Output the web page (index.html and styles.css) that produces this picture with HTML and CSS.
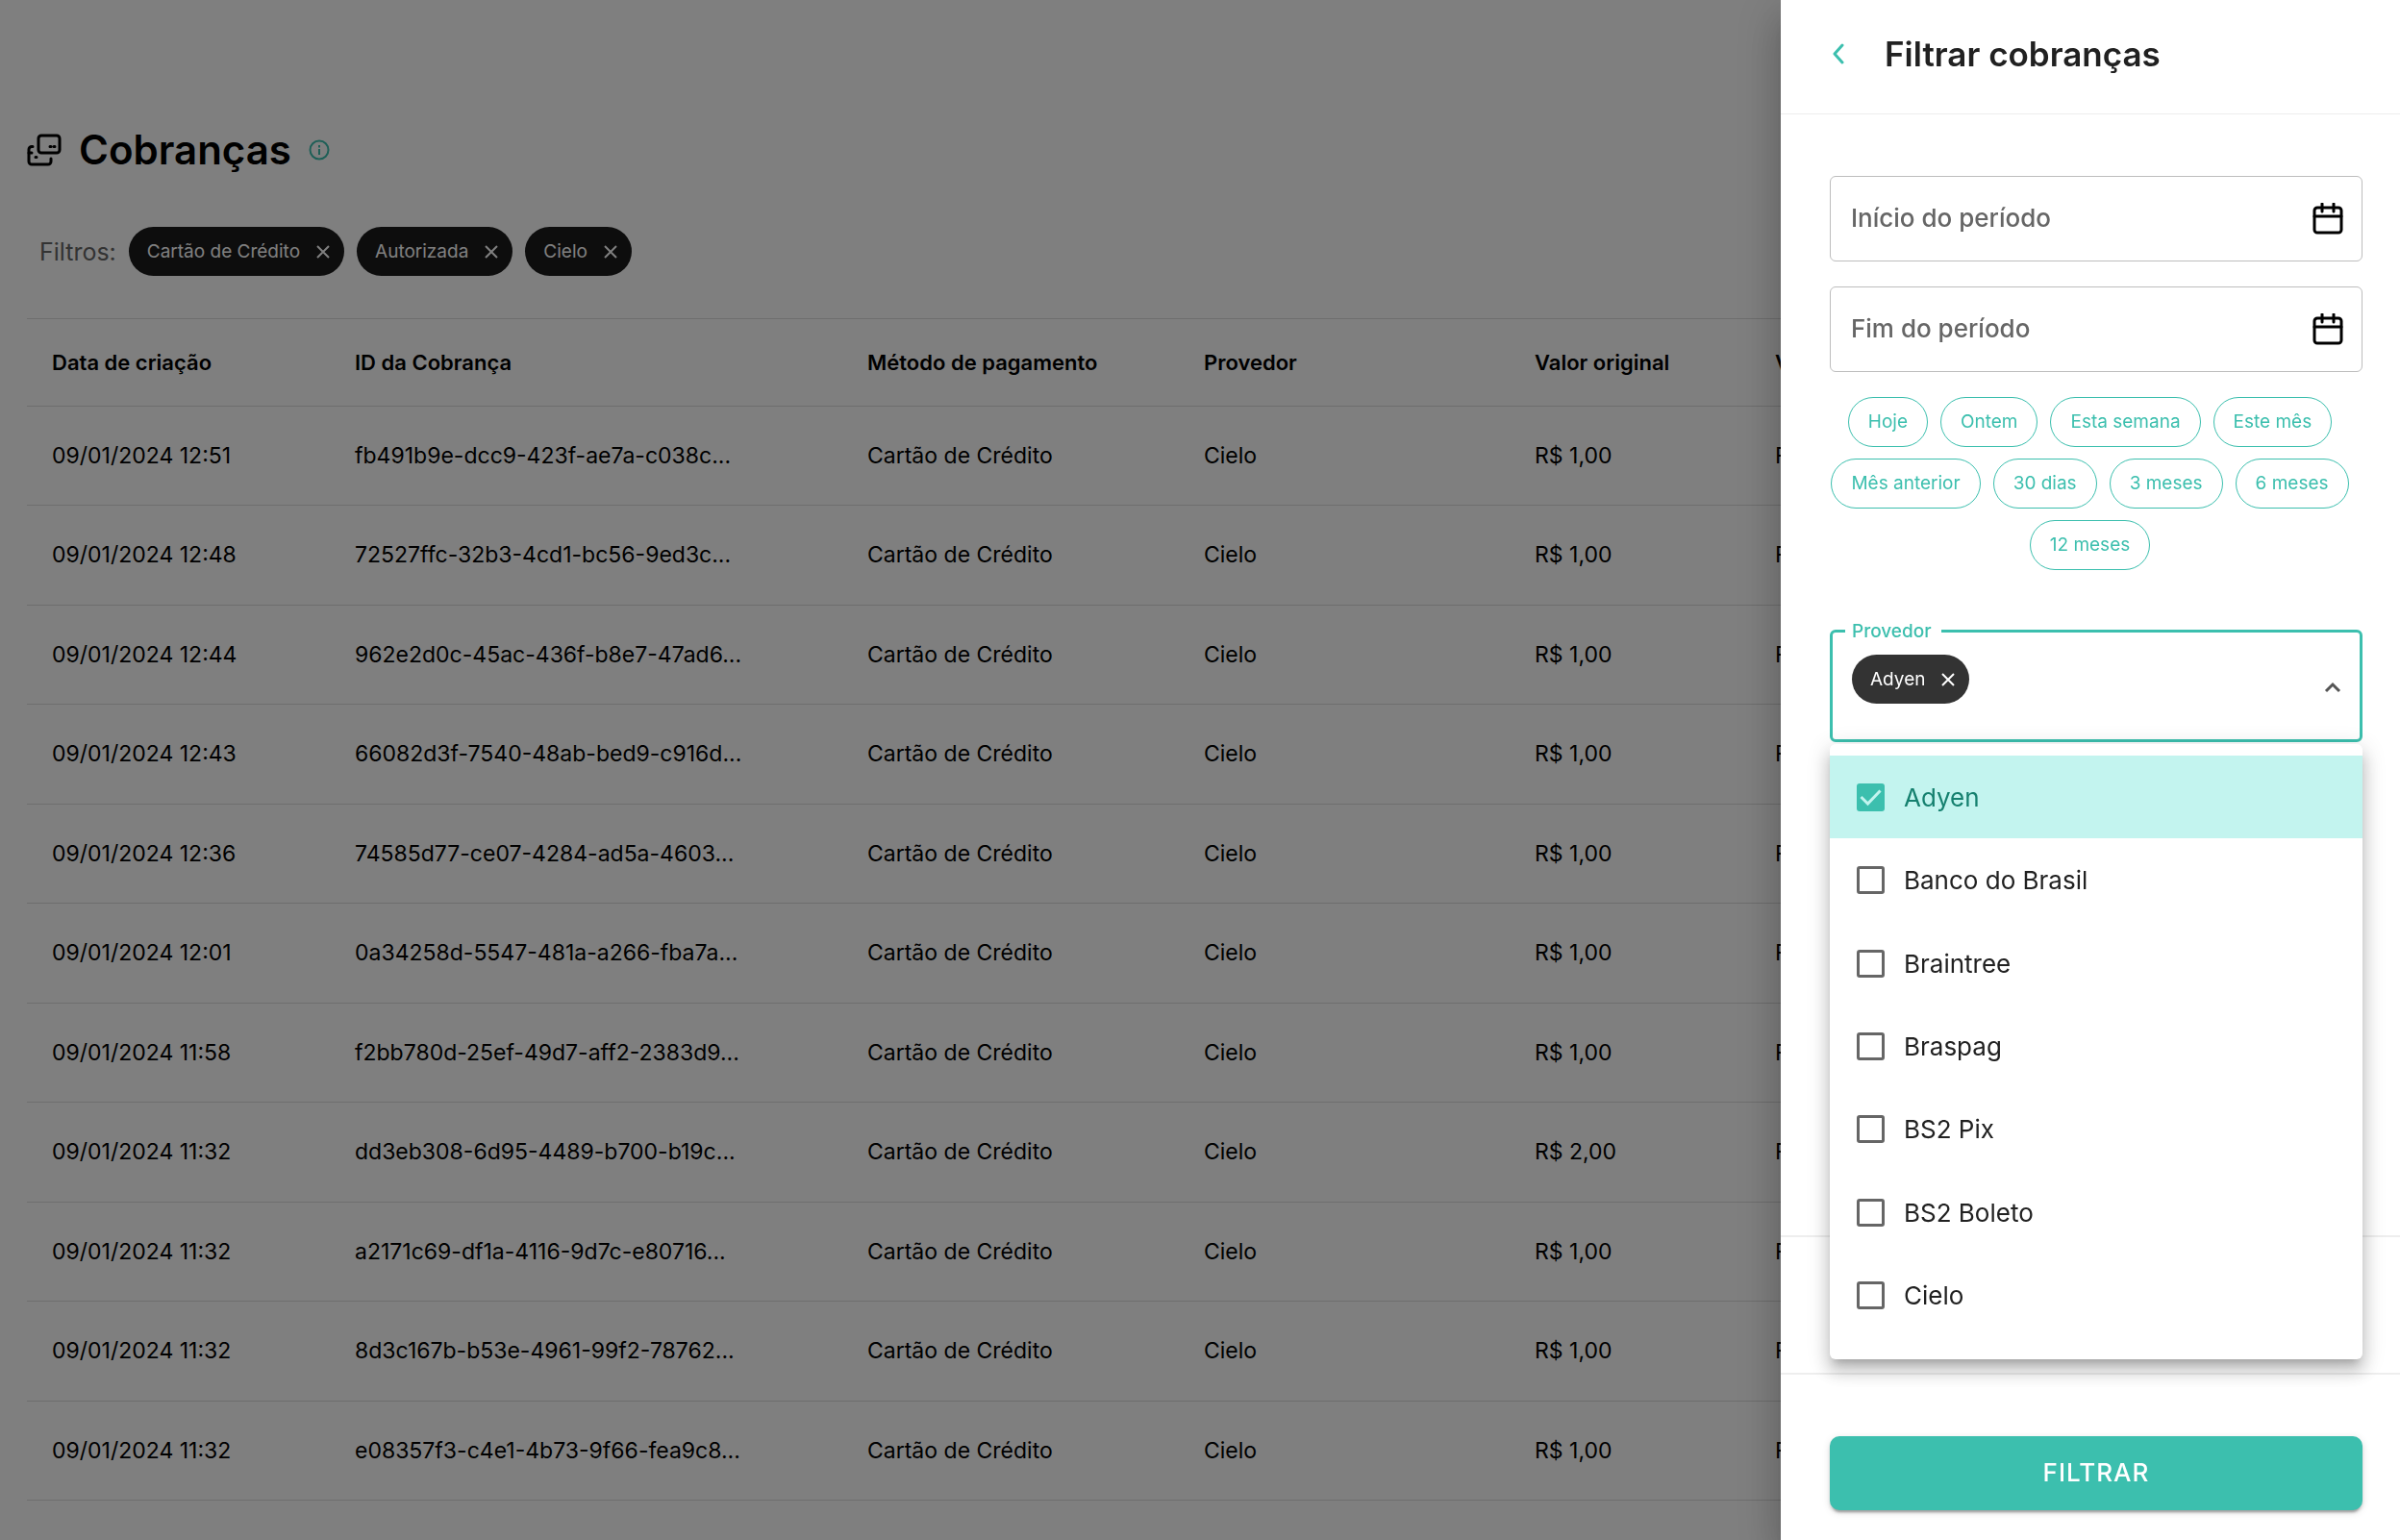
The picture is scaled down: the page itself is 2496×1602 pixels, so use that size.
FILE: index.html
```html
<!DOCTYPE html>
<html lang="pt-BR">
<head>
    <meta charset="UTF-8">
    <meta name="viewport" content="width=device-width, initial-scale=1.0">
    <title>Cobranças</title>
    <link rel="stylesheet" href="styles.css">
</head>
<body>

    <main class="page">
        <header class="page-header">
            <svg class="page-icon" viewBox="0 0 36 34" fill="none" stroke="currentColor" stroke-width="3" stroke-linecap="round" stroke-linejoin="round">
                <rect x="12" y="2" width="22" height="18" rx="3"/>
                <path d="M6 13.500H5a3 3 0 0 0-3 3V29a3 3 0 0 0 3 3h17a3 3 0 0 0 3-3v-3"/>
                <path d="M2 20h3M9 24.500h1M24 13.500h1M28 13.500h1"/>
            </svg>
            <h1>Cobranças</h1>
            <svg class="info-icon" viewBox="0 0 22 22" fill="none" stroke="currentColor" stroke-width="2">
                <circle cx="11" cy="11" r="9.500"/>
                <path d="M11 10v6M11 6v2.500"/>
            </svg>
        </header>

        <div class="filters">
            <span class="filters-label">Filtros:</span>
            <button class="chip" type="button">Cartão de Crédito <svg viewBox="0 0 14 14"><path d="M1 1l12 12M13 1L1 13"/></svg></button>
            <button class="chip" type="button">Autorizada <svg viewBox="0 0 14 14"><path d="M1 1l12 12M13 1L1 13"/></svg></button>
            <button class="chip" type="button">Cielo <svg viewBox="0 0 14 14"><path d="M1 1l12 12M13 1L1 13"/></svg></button>
        </div>

        <div class="table-wrap">
            <table>
                <colgroup>
                    <col class="col-date">
                    <col class="col-id">
                    <col class="col-method">
                    <col class="col-provider">
                    <col class="col-value">
                    <col>
                </colgroup>
                <thead>
                    <tr>
                        <th>Data de criação</th>
                        <th>ID da Cobrança</th>
                        <th>Método de pagamento</th>
                        <th>Provedor</th>
                        <th>Valor original</th>
                        <th>Valor</th>
                    </tr>
                </thead>
                <tbody>
                    <tr><td>09/01/2024 12:51</td><td>fb491b9e-dcc9-423f-ae7a-c038c...</td><td>Cartão de Crédito</td><td>Cielo</td><td>R$ 1,00</td><td>R$ 1,00</td></tr>
                    <tr><td>09/01/2024 12:48</td><td>72527ffc-32b3-4cd1-bc56-9ed3c...</td><td>Cartão de Crédito</td><td>Cielo</td><td>R$ 1,00</td><td>R$ 1,00</td></tr>
                    <tr><td>09/01/2024 12:44</td><td>962e2d0c-45ac-436f-b8e7-47ad6...</td><td>Cartão de Crédito</td><td>Cielo</td><td>R$ 1,00</td><td>R$ 1,00</td></tr>
                    <tr><td>09/01/2024 12:43</td><td>66082d3f-7540-48ab-bed9-c916d...</td><td>Cartão de Crédito</td><td>Cielo</td><td>R$ 1,00</td><td>R$ 1,00</td></tr>
                    <tr><td>09/01/2024 12:36</td><td>74585d77-ce07-4284-ad5a-4603...</td><td>Cartão de Crédito</td><td>Cielo</td><td>R$ 1,00</td><td>R$ 1,00</td></tr>
                    <tr><td>09/01/2024 12:01</td><td>0a34258d-5547-481a-a266-fba7a...</td><td>Cartão de Crédito</td><td>Cielo</td><td>R$ 1,00</td><td>R$ 1,00</td></tr>
                    <tr><td>09/01/2024 11:58</td><td>f2bb780d-25ef-49d7-aff2-2383d9...</td><td>Cartão de Crédito</td><td>Cielo</td><td>R$ 1,00</td><td>R$ 1,00</td></tr>
                    <tr><td>09/01/2024 11:32</td><td>dd3eb308-6d95-4489-b700-b19c...</td><td>Cartão de Crédito</td><td>Cielo</td><td>R$ 2,00</td><td>R$ 2,00</td></tr>
                    <tr><td>09/01/2024 11:32</td><td>a2171c69-df1a-4116-9d7c-e80716...</td><td>Cartão de Crédito</td><td>Cielo</td><td>R$ 1,00</td><td>R$ 1,00</td></tr>
                    <tr><td>09/01/2024 11:32</td><td>8d3c167b-b53e-4961-99f2-78762...</td><td>Cartão de Crédito</td><td>Cielo</td><td>R$ 1,00</td><td>R$ 1,00</td></tr>
                    <tr><td>09/01/2024 11:32</td><td>e08357f3-c4e1-4b73-9f66-fea9c8...</td><td>Cartão de Crédito</td><td>Cielo</td><td>R$ 1,00</td><td>R$ 1,00</td></tr>
                </tbody>
            </table>
        </div>
    </main>

    <div class="backdrop"></div>

    <aside class="drawer">
        <header class="drawer-header">
            <button class="back" type="button" aria-label="Voltar">
                <svg viewBox="0 0 12 24"><path d="M10 3L2 12l8 9"/></svg>
            </button>
            <h2>Filtrar cobranças</h2>
        </header>

        <form class="drawer-body" id="filter-form">
            <div class="date-field">
                <input type="text" placeholder="Início do período" aria-label="Início do período">
                <svg viewBox="0 0 32 34"><rect x="2" y="5" width="28" height="26" rx="3"/><path d="M2 14h28M10 1v8M22 1v8"/></svg>
            </div>
            <div class="date-field">
                <input type="text" placeholder="Fim do período" aria-label="Fim do período">
                <svg viewBox="0 0 32 34"><rect x="2" y="5" width="28" height="26" rx="3"/><path d="M2 14h28M10 1v8M22 1v8"/></svg>
            </div>

            <div class="shortcuts">
                <button type="button">Hoje</button>
                <button type="button">Ontem</button>
                <button type="button">Esta semana</button>
                <button type="button">Este mês</button>
                <button type="button">Mês anterior</button>
                <button type="button">30 dias</button>
                <button type="button">3 meses</button>
                <button type="button">6 meses</button>
                <button type="button">12 meses</button>
            </div>

            <div class="provider">
                <fieldset class="provider-field">
                    <legend>Provedor</legend>
                    <button class="chip" type="button">Adyen <svg viewBox="0 0 14 14"><path d="M1 1l12 12M13 1L1 13"/></svg></button>
                    <svg class="chevron" viewBox="0 0 18 12"><path d="M2 10l7-7 7 7"/></svg>
                </fieldset>

                <div class="menu">
                    <label class="selected"><input type="checkbox" checked> Adyen</label>
                    <label><input type="checkbox"> Banco do Brasil</label>
                    <label><input type="checkbox"> Braintree</label>
                    <label><input type="checkbox"> Braspag</label>
                    <label><input type="checkbox"> BS2 Pix</label>
                    <label><input type="checkbox"> BS2 Boleto</label>
                    <label><input type="checkbox"> Cielo</label>
                </div>
            </div>
        </form>

        <div class="drawer-section"></div>

        <footer class="drawer-footer">
            <button class="submit" type="submit" form="filter-form">FILTRAR</button>
        </footer>
    </aside>

</body>
</html>
```
FILE: styles.css
```css
* {
    box-sizing: border-box;
}
body {
    margin: 0;
    font-family: Inter, "Liberation Sans", sans-serif;
    font-size: 23px;
    color: #000;
    background-color: #fff;
}
button, input {
    font-family: inherit;
}
h1, h2 {
    margin: 0;
}
svg {
    flex: none;
}

/* page */
.page {
    display: flex;
    flex-direction: column;
    min-height: 100vh;
    padding: 128px 28px 41px;
}
.page-header {
    display: flex;
    align-items: center;
    gap: 18px;
    height: 56px;
}
.page-header h1 {
    padding-bottom: 2px;
    font-size: 42px;
    font-weight: 600;
}
.page-icon {
    width: 36px;
    height: 34px;
}
.info-icon {
    width: 22px;
    height: 22px;
    color: #3cbfae;
}
.filters {
    display: flex;
    align-items: center;
    gap: 13px;
    margin: 52px 0 44px;
    padding-left: 13px;
}
.filters-label {
    font-size: 25px;
    color: #666;
}
.chip {
    display: flex;
    align-items: center;
    gap: 17px;
    height: 51px;
    padding: 0 15px 0 19px;
    border: none;
    border-radius: 26px;
    background-color: #333;
    color: #fff;
    font-size: 19px;
}
.filters .chip {
    background-color: #1a1a1a;
}
.chip svg {
    width: 14px;
    height: 14px;
    fill: none;
    stroke: currentColor;
    stroke-width: 2;
}

/* table */
.table-wrap {
    display: flex;
    flex: 1;
    border-top: 1px solid #dcdcdc;
}
table {
    width: 100%;
    table-layout: fixed;
    border-collapse: collapse;
}
.col-date {
    width: 315px;
}
.col-id {
    width: 533px;
}
.col-method {
    width: 350px;
}
.col-provider {
    width: 344px;
}
.col-value {
    width: 250px;
}
th, td {
    padding: 0 26px;
    border-bottom: 1px solid #dcdcdc;
    text-align: left;
    white-space: nowrap;
}
th {
    height: 90px;
    font-size: 22px;
    font-weight: 600;
}

/* drawer */
.backdrop {
    position: fixed;
    inset: 0;
    background-color: rgba(0, 0, 0, 0.5);
}
.drawer {
    position: fixed;
    top: 0;
    right: 0;
    bottom: 0;
    display: flex;
    flex-direction: column;
    width: 644px;
    background-color: #fff;
    box-shadow: 0 13px 16px -8px rgba(0, 0, 0, 0.2), 0 26px 39px 3px rgba(0, 0, 0, 0.14), 0 10px 48px 8px rgba(0, 0, 0, 0.12);
}
.drawer-header {
    display: flex;
    align-items: center;
    gap: 42px;
    height: 119px;
    padding: 0 54px 7px;
    border-bottom: 1px solid #eee;
}
.drawer-header h2 {
    font-size: 35px;
    font-weight: 600;
    color: #212121;
}
.back {
    display: flex;
    padding: 0;
    border: none;
    background: none;
    color: #3cbfae;
}
.back svg {
    width: 12px;
    height: 24px;
    fill: none;
    stroke: currentColor;
    stroke-width: 3;
    stroke-linecap: round;
    stroke-linejoin: round;
}
.drawer-body {
    flex: 1;
    padding: 64px 39px 0 51px;
}
.date-field {
    display: flex;
    align-items: center;
    height: 89px;
    margin-bottom: 26px;
    padding: 0 19px 0 21px;
    border: 1px solid #bdbdbd;
    border-radius: 6px;
}
.date-field input {
    flex: 1;
    min-width: 0;
    padding: 0 0 2px;
    border: none;
    outline: none;
    background: none;
    font-size: 26px;
    font-weight: 500;
}
.date-field input::placeholder {
    color: #666;
    opacity: 1;
}
.date-field svg {
    width: 32px;
    height: 34px;
    fill: none;
    stroke: #000;
    stroke-width: 3;
    stroke-linecap: round;
}
.shortcuts {
    display: flex;
    flex-wrap: wrap;
    justify-content: center;
    gap: 12px 13px;
    margin: 0 13px 52px 0;
}
.shortcuts button {
    height: 52px;
    padding: 0 20px 2px;
    border: 1px solid #3cbfae;
    border-radius: 26px;
    background: none;
    color: #3cbfae;
    font-size: 19px;
}
.provider {
    position: relative;
}
.provider-field {
    display: flex;
    align-items: center;
    justify-content: space-between;
    height: 127px;
    margin: 0;
    padding: 0 19px 8px 20px;
    border: 3px solid #3cbfae;
    border-radius: 6px;
}
.provider-field legend {
    margin-left: -7px;
    padding: 0 10px 0 7px;
    color: #3cbfae;
    font-size: 19px;
    font-weight: 500;
    line-height: 23px;
}
.provider-field .chip {
    margin-bottom: 16px;
}
.chevron {
    width: 18px;
    height: 12px;
    fill: none;
    stroke: #555;
    stroke-width: 3;
}
/* options list opens over the rest of the drawer */
.menu {
    position: absolute;
    top: 100%;
    left: 0;
    right: 0;
    display: grid;
    grid-auto-rows: 1fr;
    height: 640px;
    margin-top: 2px;
    padding: 12px 0 23px;
    border-radius: 6px;
    background-color: #fff;
    box-shadow: 0 8px 8px -5px rgba(0, 0, 0, 0.2), 0 13px 16px 2px rgba(0, 0, 0, 0.14), 0 5px 23px 3px rgba(0, 0, 0, 0.12);
    z-index: 1;
}
.menu label {
    display: flex;
    align-items: center;
    gap: 20px;
    padding: 0 28px;
    color: #212121;
    font-size: 26px;
}
.menu .selected {
    background-color: #c3f4ef;
    color: #15806f;
}
.menu input {
    appearance: none;
    width: 29px;
    height: 29px;
    margin: 0;
    border: 3px solid #666;
    border-radius: 3px;
}
.menu input:checked {
    border: none;
    background: #3cbfae url("data:image/svg+xml,%3Csvg xmlns='http://www.w3.org/2000/svg' viewBox='0 0 29 29' fill='none' stroke='%23c3f4ef' stroke-width='3'%3E%3Cpath d='M4.500 14l7 7L24.500 7.500'/%3E%3C/svg%3E");
}
.drawer-section {
    height: 143px;
    border-top: 2px solid #eee;
}
.drawer-footer {
    padding: 64px 39px 31px 51px;
    border-top: 2px solid #eee;
}
.submit {
    display: block;
    width: 100%;
    height: 77px;
    padding: 0 0 2px;
    border: none;
    border-radius: 10px;
    background-color: #3cbfae;
    color: #fff;
    font-size: 26px;
    font-weight: 500;
    letter-spacing: 1px;
    box-shadow: 0 5px 2px -3px rgba(0, 0, 0, 0.2), 0 3px 3px 0 rgba(0, 0, 0, 0.14), 0 2px 8px 0 rgba(0, 0, 0, 0.12);
}
```
